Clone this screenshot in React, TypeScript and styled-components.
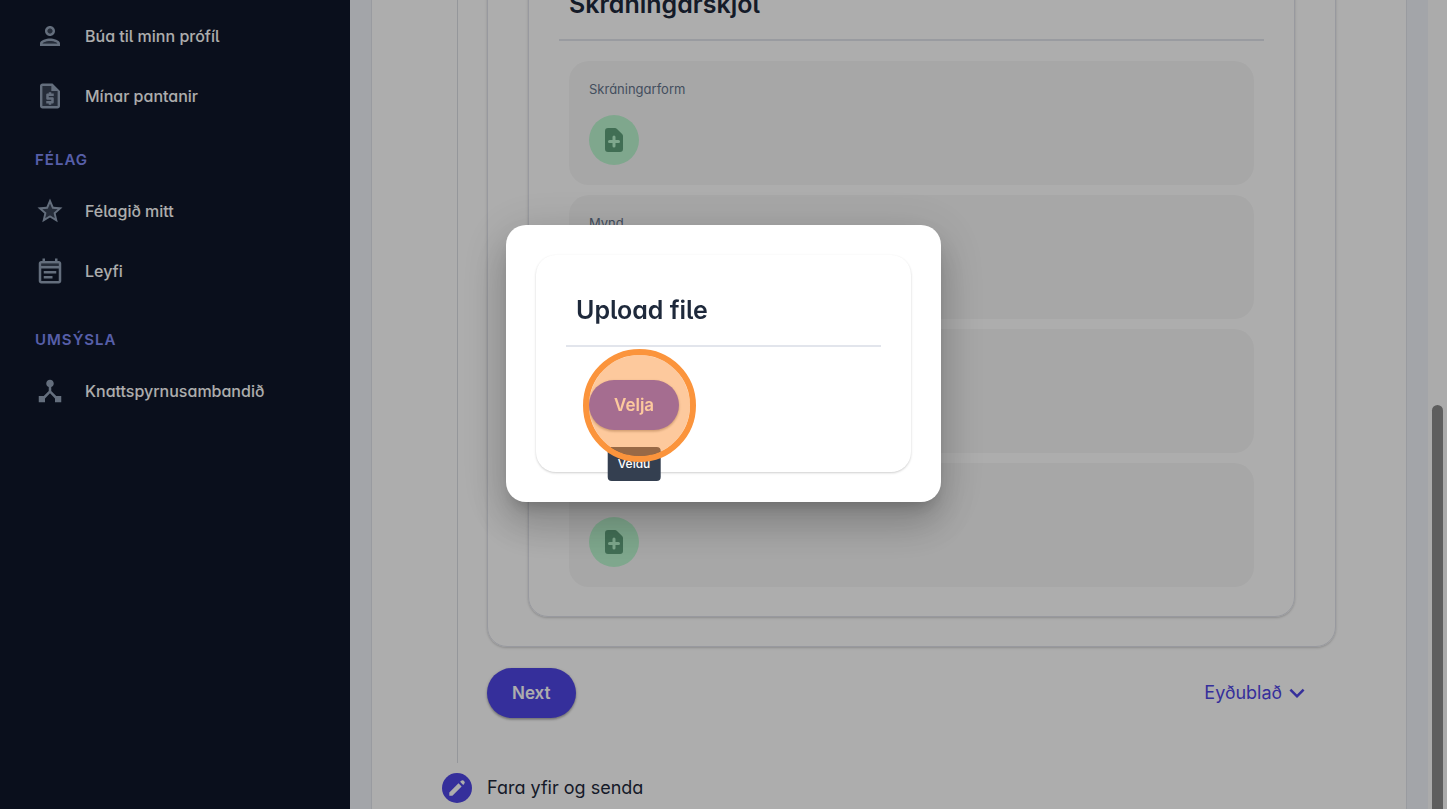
import React from "react";
import styled, { createGlobalStyle, css } from "styled-components";

const GlobalStyle = createGlobalStyle`
  *, *::before, *::after { box-sizing: border-box; }
  body {
    margin: 0;
    font-family: Inter, "Liberation Sans", sans-serif;
    color: #1e293b;
    background: #fcfcfc;
  }
  h2, p, ul { margin: 0; padding: 0; }
  ul { list-style: none; }
  button { border: 0; padding: 0; font-family: inherit; cursor: pointer; }
`;

const brandType = css`
  font-feature-settings: "cv05", "cv11";
`;

const Page = styled.div`
  display: grid;
  grid-template-columns: 350px minmax(0, 1fr) 19px;
  height: 100vh;
  overflow: hidden;
`;

const Sidebar = styled.nav`
  background: #0f172a;
  padding-top: 6px;
  overflow: hidden;
`;

const NavGroup = styled.section<{ $gap: number }>`
  padding-bottom: ${(p) => p.$gap}px;
`;

const NavHeading = styled.h2`
  ${brandType}
  padding: 0 35px 9px;
  font-size: 15px;
  font-weight: 600;
  line-height: 24px;
  letter-spacing: 1px;
  text-transform: uppercase;
  color: #818cf8;
`;

const NavLink = styled.a`
  ${brandType}
  display: flex;
  align-items: center;
  gap: 20px;
  height: 60px;
  padding: 0 35px;
  font-size: 16px;
  font-weight: 500;
  line-height: 24px;
  color: #fff;
  text-decoration: none;

  svg { color: #94a3b8; }
`;

const Main = styled.main`
  padding: 0 21px;
  background: #f1f3f9;
  overflow: hidden;
`;

const Sheet = styled.div`
  min-height: 100vh;
  padding: 0 70px;
  background: #fff;
  border: solid #e2e5ec;
  border-width: 0 1px;
`;

const StepBody = styled.section`
  margin: -83px 0 0 15px;
  padding: 0 0 45px 29px;
  border-left: 1px solid #dcdfe5;
`;

const Panel = styled.div<{ $inset: number }>`
  padding: 30px ${(p) => p.$inset}px 29px;
  border: 1px solid #e0e2ea;
  border-radius: 20px;
  box-shadow: 0 1px 3px rgba(0, 0, 0, 0.1), 0 1px 2px rgba(0, 0, 0, 0.1);
`;

const PanelTitle = styled.h2`
  ${brandType}
  padding: 10px 10px 20px;
  border-bottom: 2px solid #e2e5ec;
  font-size: 25px;
  font-weight: 600;
  line-height: 30px;
`;

const FileList = styled.ul`
  display: grid;
  gap: 10px;
  padding: 20px 10px 0;
`;

const FileCard = styled.li`
  ${brandType}
  display: grid;
  gap: 18px;
  justify-items: start;
  padding: 20px;
  border-radius: 20px;
  background: #f7f7f7;
  font-size: 13px;
  line-height: 16px;
  color: #64748b;
`;

const AddButton = styled.button`
  display: grid;
  place-items: center;
  width: 50px;
  height: 50px;
  border-radius: 50%;
  background: #bbf7d0;
  color: #61a37d;
`;

const Actions = styled.div`
  display: flex;
  align-items: center;
  justify-content: space-between;
  padding: 21px 24px 0 0;
`;

const PillButton = styled.button`
  height: 50px;
  padding: 0 25px;
  border-radius: 25px;
  background: #4f46e5;
  color: #fff;
  font-size: 17px;
  font-weight: 600;
  line-height: 24px;
  box-shadow: 0 1px 3px rgba(0, 0, 0, 0.3), 0 2px 2px rgba(0, 0, 0, 0.12);
`;

const MenuButton = styled.button`
  display: flex;
  align-items: center;
  background: none;
  color: #4f46e5;
  font-size: 18px;
  line-height: 24px;
`;

const NextStep = styled.div`
  ${brandType}
  display: flex;
  align-items: center;
  gap: 15px;
  padding: 10px 0;
  font-size: 18px;
  line-height: 24px;
`;

const StepMark = styled.span`
  display: grid;
  place-items: center;
  width: 30px;
  height: 30px;
  border-radius: 50%;
  background: #4f46e5;
  color: #fff;
`;

const ScrollTrack = styled.div`
  display: flex;
  align-items: flex-end;
  padding: 0 4px;
  background: #fcfcfc;
`;

const ScrollThumb = styled.div`
  width: 11px;
  height: 50%;
  border-radius: 6px 6px 0 0;
  background: #8b8b8b;
`;

const Backdrop = styled.div`
  position: fixed;
  inset: 0;
  display: flex;
  align-items: flex-start;
  justify-content: center;
  padding-top: 225px;
  background: rgba(0, 0, 0, 0.32);
`;

const Dialog = styled.div`
  width: 435px;
  padding: 30px;
  border-radius: 20px;
  background: #fff;
  box-shadow: 0 11px 15px -7px rgba(0, 0, 0, 0.2), 0 24px 38px 3px rgba(0, 0, 0, 0.14),
    0 9px 46px 8px rgba(0, 0, 0, 0.12);
`;

const DialogCard = styled.div`
  padding: 30px;
  border-radius: 20px;
  box-shadow: 0 1px 3px rgba(0, 0, 0, 0.1), 0 1px 2px rgba(0, 0, 0, 0.1);
`;

const DialogBody = styled.div`
  padding: 33px 23px 12px;
`;

const Anchor = styled.div`
  position: relative;
  width: max-content;
`;

const Tooltip = styled.span`
  position: absolute;
  top: 67px;
  left: 50%;
  transform: translateX(-50%);
  padding: 7px 10px;
  border-radius: 4px;
  background: #343f50;
  color: #fff;
  font-size: 12px;
  font-weight: 500;
  line-height: 20px;
`;

const ClickRing = styled.span`
  position: absolute;
  top: -31px;
  left: -6px;
  width: 113px;
  height: 113px;
  border: 6px solid #fb943c;
  border-radius: 50%;
  background: rgba(251, 148, 60, 0.5);
  background-clip: padding-box;
  pointer-events: none;
`;

type IconProps = { size: number; box?: number; d: string; tone?: string };

const Icon = ({ size, box = 24, d, tone }: IconProps) => (
  <svg width={size} height={size} viewBox={`0 0 ${box} ${box}`} fill="currentColor" aria-hidden="true">
    {tone && <path d={tone} opacity="0.3" />}
    <path d={d} fillRule="evenodd" />
  </svg>
);

const icons = {
  person: {
    tone: "M12 16c-2.7 0-5.8 1.29-6 2h12c-.23-.72-3.31-2-6-2zM14 8a2 2 0 1 1-4 0 2 2 0 0 1 4 0z",
    d: "M4 18v2h16v-2c0-2.66-5.33-4-8-4s-8 1.34-8 4zm2 0c.2-.71 3.3-2 6-2 2.69 0 5.77 1.28 6 2H6zM12 12c2.21 0 4-1.79 4-4s-1.79-4-4-4-4 1.79-4 4 1.79 4 4 4zm0-6c1.1 0 2 .9 2 2s-.9 2-2 2-2-.9-2-2 .9-2 2-2z",
  },
  quote: {
    tone: "M13 4H6v16h12V8h-5z",
    d: "M14 2H6c-1.1 0-2 .9-2 2v16c0 1.1.89 2 1.99 2H18c1.1 0 2-.9 2-2V8l-6-6zM6 20V4h7v4h5v12H6zM11 19h2v-1h1c.55 0 1-.45 1-1v-3c0-.55-.45-1-1-1h-3v-1h4v-2h-2V9h-2v1h-1c-.55 0-1 .45-1 1v3c0 .55.45 1 1 1h3v1H9v2h2v1z",
  },
  star: {
    tone: "M12 15.4l-3.76 2.27 1-4.28-3.32-2.88 4.38-.38L12 6.1l1.71 4.04 4.38.38-3.32 2.88 1 4.28z",
    d: "M22 9.24l-7.19-.62L12 2 9.19 8.63 2 9.24l5.46 4.73L5.82 21 12 17.27 18.18 21l-1.63-7.03L22 9.24zM12 15.4l-3.76 2.27 1-4.28-3.32-2.88 4.38-.38L12 6.1l1.71 4.04 4.38.38-3.32 2.88 1 4.28L12 15.4z",
  },
  note: {
    tone: "M5 6h14v2H5z",
    d: "M19 4h-1V2h-2v2H8V2H6v2H5c-1.1 0-2 .9-2 2v14c0 1.1.9 2 2 2h14c1.1 0 2-.9 2-2V6c0-1.1-.9-2-2-2zm0 16H5V10h14v10zm0-12H5V6h14v2zM7 12h10v2H7zm0 4h7v2H7z",
  },
  hub: {
    d: "M17 16l-4-4V8.82C14.16 8.4 15 7.3 15 6c0-1.66-1.34-3-3-3S9 4.34 9 6c0 1.3.84 2.4 2 2.82V12l-4 4H3v5h5v-3.05l4-4.2 4 4.2V21h5v-5h-4z",
  },
  addFile: {
    d: "M6 2a2 2 0 00-2 2v12a2 2 0 002 2h8a2 2 0 002-2V7.414A2 2 0 0015.414 6L12 2.586A2 2 0 0010.586 2H6zm5 6a1 1 0 10-2 0v2H7a1 1 0 100 2h2v2a1 1 0 102 0v-2h2a1 1 0 100-2h-2V8z",
  },
  pencil: {
    d: "M13.586 3.586a2 2 0 112.828 2.828l-.793.793-2.828-2.828.793-.793zM11.379 5.793L3 14.172V17h2.828l8.38-8.379-2.83-2.828z",
  },
  chevron: {
    d: "M7.41 8.59L12 13.17l4.59-4.58L18 10l-6 6-6-6z",
  },
};

const groups = [
  {
    title: "",
    gap: 22,
    items: [
      { label: "Búa til minn prófíl", icon: icons.person },
      { label: "Mínar pantanir", icon: icons.quote },
    ],
  },
  {
    title: "Félag",
    gap: 27,
    items: [
      { label: "Félagið mitt", icon: icons.star },
      { label: "Leyfi", icon: icons.note },
    ],
  },
  {
    title: "Umsýsla",
    gap: 27,
    items: [{ label: "Knattspyrnusambandið", icon: icons.hub }],
  },
];

const files = ["Skráningarform", "Mynd", "Vegabréf", "Samningur"];

export default function App() {
  return (
    <>
      <GlobalStyle />
      <Page>
        <Sidebar>
          {groups.map((group) => (
            <NavGroup key={group.title} $gap={group.gap}>
              {group.title && <NavHeading>{group.title}</NavHeading>}
              {group.items.map((item) => (
                <NavLink key={item.label} href="#">
                  <Icon size={30} {...item.icon} />
                  {item.label}
                </NavLink>
              ))}
            </NavGroup>
          ))}
        </Sidebar>
        <Main>
          <Sheet>
            <StepBody>
              <Panel $inset={40}>
                <Panel $inset={30}>
                  <PanelTitle>Skráningarskjöl</PanelTitle>
                  <FileList>
                    {files.map((name) => (
                      <FileCard key={name}>
                        {name}
                        <AddButton aria-label={name}>
                          <Icon size={30} box={20} {...icons.addFile} />
                        </AddButton>
                      </FileCard>
                    ))}
                  </FileList>
                </Panel>
              </Panel>
              <Actions>
                <PillButton>Next</PillButton>
                <MenuButton>
                  Eyðublað
                  <Icon size={30} {...icons.chevron} />
                </MenuButton>
              </Actions>
            </StepBody>
            <NextStep>
              <StepMark>
                <Icon size={22} box={20} {...icons.pencil} />
              </StepMark>
              Fara yfir og senda
            </NextStep>
          </Sheet>
        </Main>
        <ScrollTrack>
          <ScrollThumb />
        </ScrollTrack>
      </Page>
      <Backdrop>
        <Dialog role="dialog" aria-labelledby="upload-title">
          <DialogCard>
            <PanelTitle id="upload-title">Upload file</PanelTitle>
            <DialogBody>
              <Anchor>
                <PillButton aria-describedby="choose-tip">Velja</PillButton>
                <Tooltip role="tooltip" id="choose-tip">
                  Veldu
                </Tooltip>
                <ClickRing />
              </Anchor>
            </DialogBody>
          </DialogCard>
        </Dialog>
      </Backdrop>
    </>
  );
}
